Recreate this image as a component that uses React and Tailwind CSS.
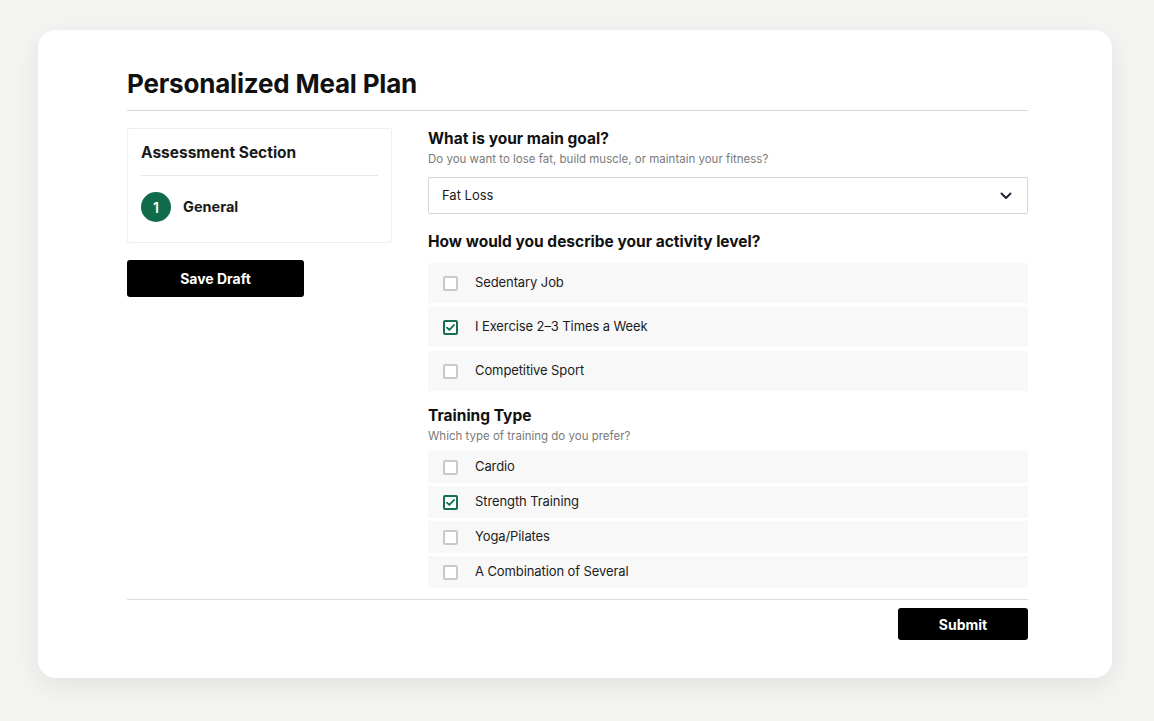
import React from "react";

const font = { fontFamily: "Inter, 'Noto Sans', Arial, sans-serif" };

function Check({ checked }) {
  return (
    <span
      className={
        "flex h-[15px] w-[15px] shrink-0 items-center justify-center rounded-[2px] border-2 bg-white " +
        (checked ? "border-[#157050]" : "border-[#c9c9c9]")
      }
    >
      {checked && (
        <svg width="11" height="11" viewBox="0 0 12 12" fill="none">
          <path d="M2.2 6.2l2.5 2.5 5.1-5.4" stroke="#157050" strokeWidth="2" strokeLinecap="round" strokeLinejoin="round" />
        </svg>
      )}
    </span>
  );
}

function Option({ label, checked, tall }) {
  return (
    <div
      className={
        "flex items-center gap-[17px] bg-[#f8f8f8] pl-[15px] text-[13px] tracking-[-0.1px] text-[#1c1c1c] " +
        (tall ? "h-[40px]" : "h-[32px]")
      }
    >
      <Check checked={checked} />
      <span>{label}</span>
    </div>
  );
}

export default function App() {
  return (
    <div className="min-h-[721px] bg-[#f4f4f2] pt-[30px]" style={font}>
      <div className="ml-[38px] h-[648px] w-[1074px] rounded-[18px] bg-white pl-[89px] pr-[84px] pt-[38px] shadow-[0_8px_30px_rgba(0,0,0,0.08)]">
        <div className="border-b border-[#d8d8d8] pb-[10px]">
          <h1 className="text-[26px] font-bold leading-[32px] tracking-[-0.2px] text-[#111]">Personalized Meal Plan</h1>
        </div>

        <div className="mt-[17px] flex gap-[36px]">
          {/* sidebar */}
          <div className="w-[265px] shrink-0">
            <div className="h-[115px] rounded-[2px] border border-[#efefef] px-[13px]">
              <div className="flex h-[47px] items-center border-b border-[#e6e6e6] pt-[2px] text-[15.5px] font-bold text-[#1a1a1a]">
                Assessment Section
              </div>
              <div className="mt-[16px] flex items-center gap-[12px]">
                <span className="flex h-[30px] w-[30px] items-center justify-center rounded-full bg-[#0f6b4a] text-[14px] font-semibold text-white">
                  1
                </span>
                <span className="text-[14.5px] font-bold text-[#1a1a1a]">General</span>
              </div>
            </div>
            <button className="mt-[17px] flex h-[37px] w-[177px] items-center justify-center rounded-[3px] bg-black text-[14px] font-bold text-white">
              Save Draft
            </button>
          </div>

          {/* form */}
          <div className="w-[600px]">
            <div className="pt-[1px] text-[15.5px] font-bold leading-[20px] text-[#111]">What is your main goal?</div>
            <div className="mt-[2px] text-[11.5px] leading-[16px] text-[#7a7a7a]">
              Do you want to lose fat, build muscle, or maintain your fitness?
            </div>
            <div className="mt-[10px] flex h-[37px] items-center justify-between rounded-[2px] border border-[#d6d6d6] pl-[13px] pr-[15px] text-[13px] text-[#1c1c1c]">
              <span>Fat Loss</span>
              <svg width="12" height="8" viewBox="0 0 12 8" fill="none">
                <path d="M1.5 1.5L6 6l4.5-4.5" stroke="#23263a" strokeWidth="2" strokeLinecap="round" strokeLinejoin="round" />
              </svg>
            </div>

            <div className="mt-[18px] text-[15.5px] font-bold leading-[20px] text-[#111]">
              How would you describe your activity level?
            </div>
            <div className="mt-[11px] flex flex-col gap-[4px]">
              <Option tall label="Sedentary Job" />
              <Option tall checked label="I Exercise 2–3 Times a Week" />
              <Option tall label="Competitive Sport" />
            </div>

            <div className="mt-[15px] text-[15.5px] font-bold leading-[20px] text-[#111]">Training Type</div>
            <div className="mt-[2px] text-[11.5px] leading-[16px] text-[#7a7a7a]">Which type of training do you prefer?</div>
            <div className="mt-[7px] flex flex-col gap-[3px]">
              <Option label="Cardio" />
              <Option checked label="Strength Training" />
              <Option label="Yoga/Pilates" />
              <Option label="A Combination of Several" />
            </div>
          </div>
        </div>

        <div className="mt-[11px] border-t border-[#dcdcdc] pt-[8px]">
          <div className="flex justify-end">
            <button className="flex h-[32px] w-[130px] items-center justify-center rounded-[3px] bg-black text-[14px] font-bold text-white">
              Submit
            </button>
          </div>
        </div>
      </div>
    </div>
  );
}
